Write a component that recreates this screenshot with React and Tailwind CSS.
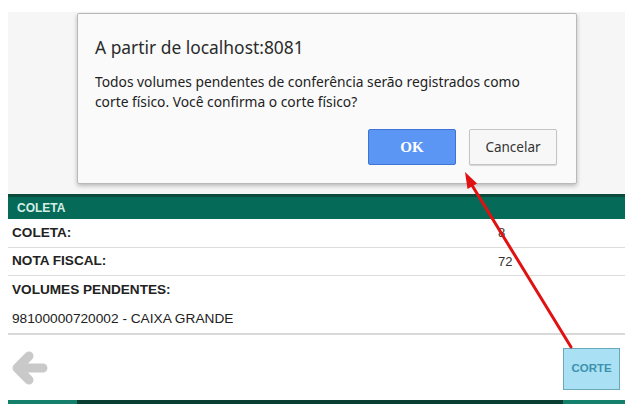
import { useState } from "react"

function BackArrow() {
  return (
    <svg width="38" height="40" viewBox="0 0 38 40" fill="none">
      <path
        d="M33 20 H8 M19 8 L7 20 L19 32"
        stroke="#c9c9c9"
        strokeWidth="9"
        strokeLinecap="round"
        strokeLinejoin="round"
      />
    </svg>
  )
}

function Row({ label, value, className = "" }) {
  return (
    <div className={`flex items-center h-[28px] border-b border-[#dcdcdc] ${className}`}>
      <span className="w-[490px] pl-[4px] font-bold text-[13.6px] text-[#222]">{label}</span>
      <span className="text-[13px] text-[#333]">{value}</span>
    </div>
  )
}

export default function App() {
  const [open] = useState(true)

  return (
    <div className="relative w-[635px] h-[415px] overflow-hidden bg-white font-['Liberation_Sans',Arial,sans-serif]">
      <div className="pt-[12px] pl-[8px] pr-[10px]">
        <div className="h-[182px] bg-[#f6f6f6]" />

        <div className="h-[25px] flex items-center border-t-[3px] border-[#0b4b3c] bg-[#066a58] pl-[9px] text-[12px] font-bold text-[#d5efe5]">
          COLETA
        </div>
        <Row label="COLETA:" value="8" className="h-[29px]" />
        <Row label="NOTA FISCAL:" value="72" />
        <div className="flex items-center h-[29px] pl-[4px] font-bold text-[13.6px] text-[#222]">
          VOLUMES PENDENTES:
        </div>
        <div className="flex items-center h-[30px] pl-[4px] border-b-[2px] border-[#d9d9d9] text-[13.7px] text-[#222]">
          98100000720002 - CAIXA GRANDE
        </div>

        <div className="h-[65px] flex items-center justify-between pl-[2px] pr-[5px]">
          <BackArrow />
          <button className="w-[57px] h-[42px] mt-[2px] bg-[#a9e0f4] border border-[#69a9bb] text-[11.5px] font-bold text-[#3c92ac]">
            CORTE
          </button>
        </div>
        <div className="flex h-[4px]">
          <div className="w-[69px] bg-[#14806b]" />
          <div className="flex-1 bg-[#0b3e33]" />
          <div className="w-[62px] bg-[#14806b]" />
        </div>
      </div>

      {open && (
        <div className="absolute left-[77px] top-[13px] w-[500px] h-[171px] bg-[#fafafa] border border-[#b9b9b9] rounded-[2px] shadow-[0_2px_4px_rgba(0,0,0,0.25)] font-['Noto_Sans',sans-serif] text-[#333]">
          <div className="pl-[17px] pt-[21px] text-[17.4px] leading-[24px] text-[#2b2b2b]">A partir de localhost:8081</div>
          <div className="pl-[17px] mt-[13px] text-[13.8px] leading-[20px] text-[#222]">
            Todos volumes pendentes de conferência serão registrados como
            <br />
            corte físico. Você confirma o corte físico?
          </div>
          <div className="flex justify-end gap-[13px] pr-[19px] mt-[17px]">
            <button className="w-[88px] h-[36px] bg-[#5b96f5] border border-[#3f74d6] rounded-[2px] font-['Liberation_Serif',serif] font-bold text-[15px] text-white">
              OK
            </button>
            <button className="w-[88px] h-[36px] bg-[#f7f7f7] border border-[#c4c4c4] rounded-[2px] shadow-[0_1px_1px_rgba(0,0,0,0.15)] text-[13.5px] text-[#333]">
              Cancelar
            </button>
          </div>
        </div>
      )}

      <svg className="absolute inset-0 pointer-events-none" width="635" height="415" viewBox="0 0 635 415">
        <line x1="571" y1="347" x2="470" y2="182" stroke="#e11111" strokeWidth="3" strokeLinecap="round" />
        <polygon points="465,172 467.5,189 477,183.5" fill="#e11111" />
      </svg>
    </div>
  )
}
